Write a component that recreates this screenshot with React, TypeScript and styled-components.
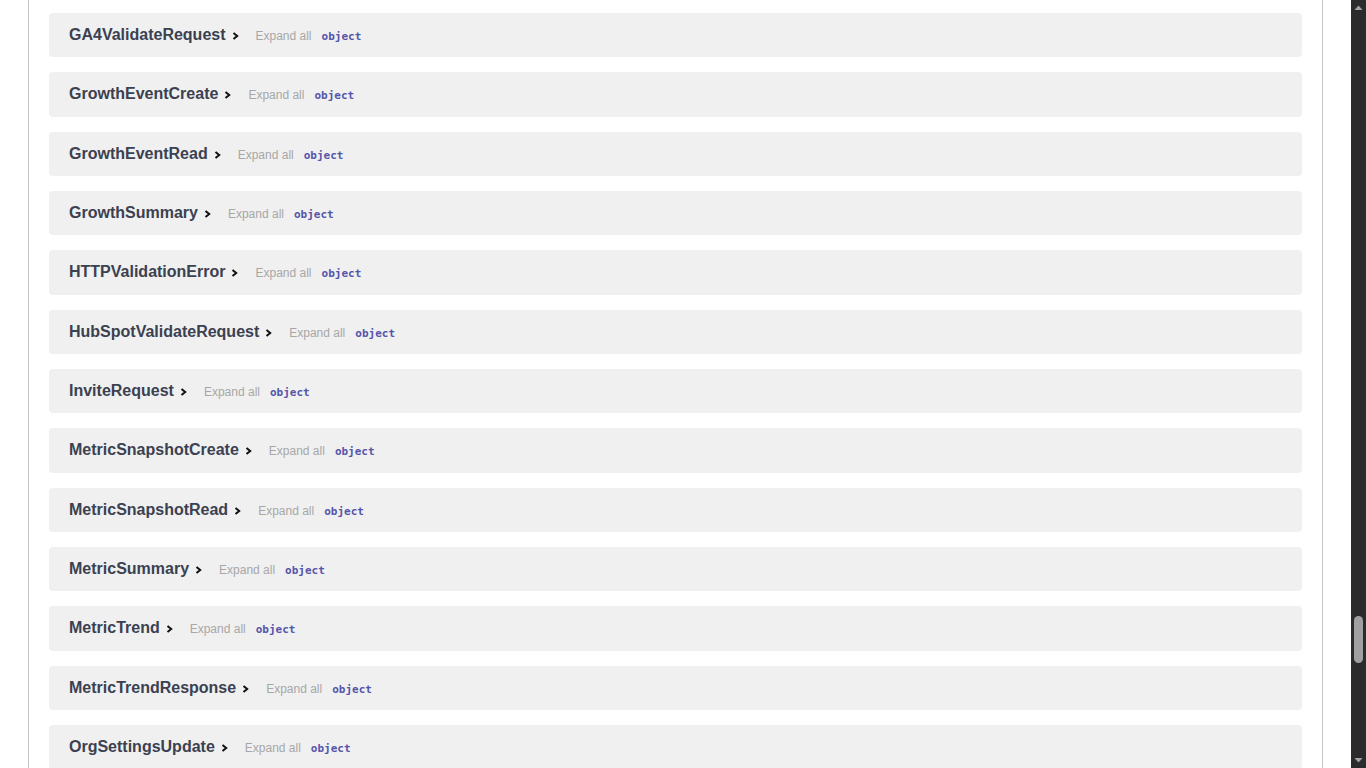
import React from "react";
import styled, { createGlobalStyle } from "styled-components";

const COLOR_TITLE = "#3b4151";
const COLOR_MUTED = "#a7a7a7";
const COLOR_TYPE = "#55a";

const GlobalStyle = createGlobalStyle`
  html, body {
    margin: 0;
    padding: 0;
    overflow: hidden;
    background: #fff;
  }
  body {
    font-family: "Liberation Sans", Arial, sans-serif;
  }
`;

const Page = styled.div`
  display: flex;
  height: 768px;
  width: 1366px;
`;

const Main = styled.main`
  flex: 1;
  padding: 0 28px;
  overflow: hidden;
`;

const Models = styled.section`
  height: 100%;
  box-sizing: border-box;
  border-left: 1px solid rgba(59, 65, 81, 0.3);
  border-right: 1px solid rgba(59, 65, 81, 0.3);
  padding: 13px 20px 0;
  display: flex;
  flex-direction: column;
  gap: 15px;
`;

const ModelContainer = styled.div`
  flex: none;
  height: 44.33px;
  box-sizing: border-box;
  background: #f0f0f0;
  border-radius: 4px;
  padding: 13px 20px 0;
  display: flex;
  align-items: baseline;
`;

const Title = styled.span`
  font-size: 16px;
  font-weight: 700;
  color: ${COLOR_TITLE};
`;

const Chevron = styled.svg`
  width: 7px;
  height: 8px;
  margin: 0 17px -1px 6px;
`;

const ExpandAll = styled.span`
  font-size: 12px;
  color: ${COLOR_MUTED};
  margin-right: 10px;
`;

const PropType = styled.span`
  font-family: "DejaVu Sans Mono", "Liberation Mono", monospace;
  font-size: 11px;
  font-weight: 700;
  color: ${COLOR_TYPE};
`;

const Scrollbar = styled.div`
  width: 15px;
  background: #2b2b2b;
  display: flex;
  flex-direction: column;
  align-items: center;
`;

const ScrollArrow = styled.svg`
  width: 9px;
  height: 15px;
  flex: none;
`;

const Track = styled.div`
  flex: 1;
  display: flex;
  flex-direction: column;
  align-items: center;
`;

const Thumb = styled.div<{ $offset: number }>`
  margin-top: ${(p) => p.$offset}px;
  width: 9px;
  height: 47px;
  border-radius: 5px;
  background: #a0a0a0;
`;

const models = [
  "GA4ValidateRequest",
  "GrowthEventCreate",
  "GrowthEventRead",
  "GrowthSummary",
  "HTTPValidationError",
  "HubSpotValidateRequest",
  "InviteRequest",
  "MetricSnapshotCreate",
  "MetricSnapshotRead",
  "MetricSummary",
  "MetricTrend",
  "MetricTrendResponse",
  "OrgSettingsUpdate",
];

function Model({ name }: { name: string }) {
  return (
    <ModelContainer>
      <Title>{name}</Title>
      <Chevron viewBox="0 0 7 8">
        <polyline
          points="1.5,1 5.2,4 1.5,7"
          fill="none"
          stroke="#111"
          strokeWidth="2"
        />
      </Chevron>
      <ExpandAll>Expand all</ExpandAll>
      <PropType>object</PropType>
    </ModelContainer>
  );
}

export default function App() {
  return (
    <>
      <GlobalStyle />
      <Page>
        <Main>
          <Models>
            {models.map((m) => (
              <Model key={m} name={m} />
            ))}
          </Models>
        </Main>
        <Scrollbar>
          <ScrollArrow viewBox="0 0 9 15">
            <polygon points="0.5,10 4.5,5.5 8.5,10" fill="#a3a3a3" />
          </ScrollArrow>
          <Track>
            <Thumb $offset={601} />
          </Track>
          <ScrollArrow viewBox="0 0 9 15">
            <polygon points="0.5,5 4.5,9.5 8.5,5" fill="#a3a3a3" />
          </ScrollArrow>
        </Scrollbar>
      </Page>
    </>
  );
}
